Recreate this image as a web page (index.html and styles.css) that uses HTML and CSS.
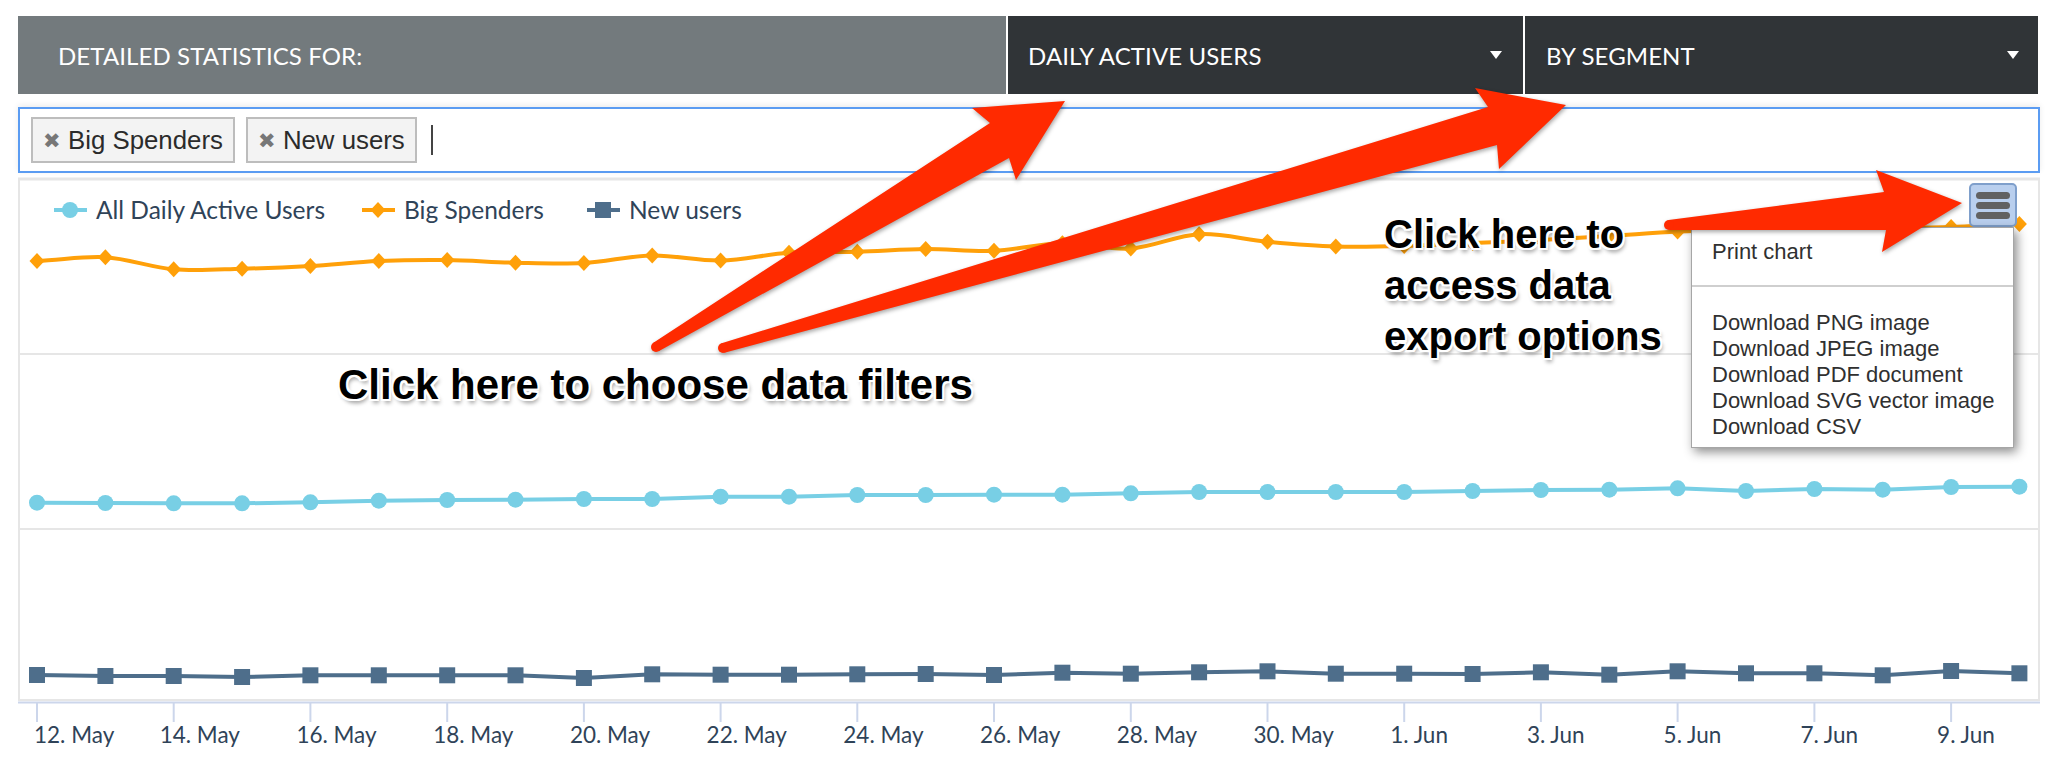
FILE: index.html
```html
<!DOCTYPE html>
<html>
<head>
<meta charset="utf-8">
<link rel="stylesheet" href="styles.css">
</head>
<body>
<div class="page">
  <div class="topbar">
    <div class="tb-label">DETAILED STATISTICS FOR:</div>
    <div class="tb-select"><span>DAILY ACTIVE USERS</span><span class="caret"></span></div>
    <div class="tb-select tb-last"><span>BY SEGMENT</span><span class="caret"></span></div>
  </div>

  <div class="filter">
    <span class="tag"><span class="tag-x">✖</span>Big Spenders</span>
    <span class="tag"><span class="tag-x">✖</span>New users</span>
    <span class="cursor"></span>
  </div>

  <div class="chart">
    <svg class="chart-svg" width="2022" height="587" viewBox="18 177 2022 587">
      <defs>
        <path id="dia" d="M0,-8 L7.5,0 L0,8 L-7.5,0 Z"/>
        <circle id="dot" r="8"/>
        <rect id="sq" x="-8" y="-8" width="16" height="16"/>
      </defs>
      <!-- frame & grid -->
      <g class="grid">
        <line x1="18" y1="179" x2="2040" y2="179" class="grid-top"/>
        <line x1="18" y1="354" x2="2040" y2="354"/>
        <line x1="18" y1="529" x2="2040" y2="529"/>
        <line x1="18" y1="700" x2="2040" y2="700"/>
        <line x1="19" y1="179" x2="19" y2="701"/>
        <line x1="2039" y1="179" x2="2039" y2="701"/>
      </g>
      <line class="axis" x1="18" y1="702.5" x2="2040" y2="702.5"/>
      <g class="ticks">
        <line x1="37" y1="703" x2="37" y2="722"/>
        <line x1="173.7" y1="703" x2="173.7" y2="722"/>
        <line x1="310.4" y1="703" x2="310.4" y2="722"/>
        <line x1="447.2" y1="703" x2="447.2" y2="722"/>
        <line x1="583.9" y1="703" x2="583.9" y2="722"/>
        <line x1="720.6" y1="703" x2="720.6" y2="722"/>
        <line x1="857.3" y1="703" x2="857.3" y2="722"/>
        <line x1="994" y1="703" x2="994" y2="722"/>
        <line x1="1130.8" y1="703" x2="1130.8" y2="722"/>
        <line x1="1267.5" y1="703" x2="1267.5" y2="722"/>
        <line x1="1404.2" y1="703" x2="1404.2" y2="722"/>
        <line x1="1540.9" y1="703" x2="1540.9" y2="722"/>
        <line x1="1677.6" y1="703" x2="1677.6" y2="722"/>
        <line x1="1814.4" y1="703" x2="1814.4" y2="722"/>
        <line x1="1951.1" y1="703" x2="1951.1" y2="722"/>
      </g>
      <g class="xlabels">
        <text x="34" y="743">12. May</text>
        <text x="159.7" y="743">14. May</text>
        <text x="296.4" y="743">16. May</text>
        <text x="433.2" y="743">18. May</text>
        <text x="569.9" y="743">20. May</text>
        <text x="706.6" y="743">22. May</text>
        <text x="843.3" y="743">24. May</text>
        <text x="980" y="743">26. May</text>
        <text x="1116.8" y="743">28. May</text>
        <text x="1253.5" y="743">30. May</text>
        <text x="1390.2" y="743">1. Jun</text>
        <text x="1526.9" y="743">3. Jun</text>
        <text x="1663.6" y="743">5. Jun</text>
        <text x="1800.4" y="743">7. Jun</text>
        <text x="1937.1" y="743">9. Jun</text>
      </g>

      <!-- legend -->
      <g class="legend">
        <line class="s-cyan-line" x1="54" y1="210" x2="87" y2="210"/>
        <use href="#dot" x="70" y="210" class="s-cyan"/>
        <text x="96" y="218.5">All Daily Active Users</text>
        <line class="s-orange-line" x1="362" y1="210" x2="395" y2="210"/>
        <use href="#dia" x="378" y="210" class="s-orange"/>
        <text x="404" y="218.5">Big Spenders</text>
        <line class="s-dark-line" x1="587" y1="210" x2="620" y2="210"/>
        <use href="#sq" x="603" y="210" class="s-dark"/>
        <text x="629" y="218.5">New users</text>
      </g>

      <!-- Big Spenders (spline) -->
      <path class="s-orange-line" d="M37,261 C59.8,260.4 82.6,255.9 105.4,257.3 C128.2,258.7 150.9,267.4 173.7,269.3 C196.5,271.2 219.3,269.3 242.1,268.7 C264.9,268.2 287.6,267.3 310.4,266 C333.2,264.7 356,262 378.8,261 C401.6,260 424.4,259.7 447.2,260 C470,260.3 492.7,262.2 515.5,262.7 C538.3,263.2 561.1,264.2 583.9,263 C606.7,261.8 629.4,255.9 652.2,255.5 C675,255.1 697.8,261 720.6,260.5 C743.4,260 766.2,254.2 789,252.7 C811.8,251.2 834.5,252.3 857.3,251.7 C880.1,251.1 902.9,249.2 925.7,249 C948.5,248.9 971.2,251.8 994,250.8 C1016.8,249.9 1039.6,243.7 1062.4,243.3 C1085.2,242.9 1108,250 1130.8,248.5 C1153.6,247 1176.3,235.3 1199.1,234.2 C1221.9,233.1 1244.7,239.7 1267.5,241.7 C1290.3,243.8 1313,245.8 1335.8,246.5 C1358.6,247.2 1381.4,246.6 1404.2,246 C1427,245.4 1449.8,244 1472.6,243 C1495.4,242 1518.1,241.2 1540.9,240 C1563.7,238.8 1586.5,237.4 1609.3,236 C1632.1,234.6 1654.8,232.5 1677.6,231.5 C1700.4,230.5 1723.2,230.4 1746,230 C1768.8,229.6 1791.6,229.3 1814.4,229 C1837.2,228.7 1859.9,228.3 1882.7,228 C1905.5,227.7 1928.3,227.7 1951.1,227 C1973.9,226.3 1996.6,224.5 2019.4,224"/>
      <g class="s-orange">
        <use href="#dia" x="37" y="261"/><use href="#dia" x="105.4" y="257.3"/><use href="#dia" x="173.7" y="269.3"/><use href="#dia" x="242.1" y="268.7"/><use href="#dia" x="310.4" y="266"/><use href="#dia" x="378.8" y="261"/><use href="#dia" x="447.2" y="260"/><use href="#dia" x="515.5" y="262.7"/><use href="#dia" x="583.9" y="263"/><use href="#dia" x="652.2" y="255.5"/><use href="#dia" x="720.6" y="260.5"/><use href="#dia" x="789" y="252.7"/><use href="#dia" x="857.3" y="251.7"/><use href="#dia" x="925.7" y="249"/><use href="#dia" x="994" y="250.8"/><use href="#dia" x="1062.4" y="243.3"/><use href="#dia" x="1130.8" y="248.5"/><use href="#dia" x="1199.1" y="234.2"/><use href="#dia" x="1267.5" y="241.7"/><use href="#dia" x="1335.8" y="246.5"/><use href="#dia" x="1404.2" y="246"/><use href="#dia" x="1472.6" y="243"/><use href="#dia" x="1540.9" y="240"/><use href="#dia" x="1609.3" y="236"/><use href="#dia" x="1677.6" y="231.5"/><use href="#dia" x="1746" y="230"/><use href="#dia" x="1814.4" y="229"/><use href="#dia" x="1882.7" y="228"/><use href="#dia" x="1951.1" y="227"/><use href="#dia" x="2019.4" y="224"/>
      </g>

      <!-- All Daily Active Users -->
      <polyline class="s-cyan-line" points="37,502.7 105.4,503 173.7,503.3 242.1,503.3 310.4,502.3 378.8,500.7 447.2,500 515.5,499.7 583.9,499 652.2,499 720.6,496.7 789,496.7 857.3,495 925.7,495 994,494.7 1062.4,494.7 1130.8,493.3 1199.1,492 1267.5,492 1335.8,492 1404.2,492 1472.6,491 1540.9,490 1609.3,489.7 1677.6,488.3 1746,491 1814.4,489 1882.7,489.7 1951.1,487 2019.4,486.7"/>
      <g class="s-cyan">
        <use href="#dot" x="37" y="502.7"/><use href="#dot" x="105.4" y="503"/><use href="#dot" x="173.7" y="503.3"/><use href="#dot" x="242.1" y="503.3"/><use href="#dot" x="310.4" y="502.3"/><use href="#dot" x="378.8" y="500.7"/><use href="#dot" x="447.2" y="500"/><use href="#dot" x="515.5" y="499.7"/><use href="#dot" x="583.9" y="499"/><use href="#dot" x="652.2" y="499"/><use href="#dot" x="720.6" y="496.7"/><use href="#dot" x="789" y="496.7"/><use href="#dot" x="857.3" y="495"/><use href="#dot" x="925.7" y="495"/><use href="#dot" x="994" y="494.7"/><use href="#dot" x="1062.4" y="494.7"/><use href="#dot" x="1130.8" y="493.3"/><use href="#dot" x="1199.1" y="492"/><use href="#dot" x="1267.5" y="492"/><use href="#dot" x="1335.8" y="492"/><use href="#dot" x="1404.2" y="492"/><use href="#dot" x="1472.6" y="491"/><use href="#dot" x="1540.9" y="490"/><use href="#dot" x="1609.3" y="489.7"/><use href="#dot" x="1677.6" y="488.3"/><use href="#dot" x="1746" y="491"/><use href="#dot" x="1814.4" y="489"/><use href="#dot" x="1882.7" y="489.7"/><use href="#dot" x="1951.1" y="487"/><use href="#dot" x="2019.4" y="486.7"/>
      </g>

      <!-- New users -->
      <polyline class="s-dark-line" points="37,675 105.4,676 173.7,676 242.1,677 310.4,675.3 378.8,675.3 447.2,675.3 515.5,675.3 583.9,678 652.2,674.3 720.6,674.7 789,674.7 857.3,674.3 925.7,674 994,675 1062.4,672.7 1130.8,673.7 1199.1,672.3 1267.5,671.3 1335.8,673.7 1404.2,673.7 1472.6,674 1540.9,672.3 1609.3,674.7 1677.6,671.3 1746,673.3 1814.4,673.3 1882.7,675.3 1951.1,671 2019.4,673.3"/>
      <g class="s-dark">
        <use href="#sq" x="37" y="675"/><use href="#sq" x="105.4" y="676"/><use href="#sq" x="173.7" y="676"/><use href="#sq" x="242.1" y="677"/><use href="#sq" x="310.4" y="675.3"/><use href="#sq" x="378.8" y="675.3"/><use href="#sq" x="447.2" y="675.3"/><use href="#sq" x="515.5" y="675.3"/><use href="#sq" x="583.9" y="678"/><use href="#sq" x="652.2" y="674.3"/><use href="#sq" x="720.6" y="674.7"/><use href="#sq" x="789" y="674.7"/><use href="#sq" x="857.3" y="674.3"/><use href="#sq" x="925.7" y="674"/><use href="#sq" x="994" y="675"/><use href="#sq" x="1062.4" y="672.7"/><use href="#sq" x="1130.8" y="673.7"/><use href="#sq" x="1199.1" y="672.3"/><use href="#sq" x="1267.5" y="671.3"/><use href="#sq" x="1335.8" y="673.7"/><use href="#sq" x="1404.2" y="673.7"/><use href="#sq" x="1472.6" y="674"/><use href="#sq" x="1540.9" y="672.3"/><use href="#sq" x="1609.3" y="674.7"/><use href="#sq" x="1677.6" y="671.3"/><use href="#sq" x="1746" y="673.3"/><use href="#sq" x="1814.4" y="673.3"/><use href="#sq" x="1882.7" y="675.3"/><use href="#sq" x="1951.1" y="671"/><use href="#sq" x="2019.4" y="673.3"/>
      </g>
    </svg>

    <div class="menu-btn"><span></span><span></span><span></span></div>
    <div class="menu">
      <div class="menu-item">Print chart</div>
      <div class="menu-sep"></div>
      <div class="menu-item">Download PNG image</div>
      <div class="menu-item">Download JPEG image</div>
      <div class="menu-item">Download PDF document</div>
      <div class="menu-item">Download SVG vector image</div>
      <div class="menu-item">Download CSV</div>
    </div>
  </div>

  <svg class="arrows" width="2054" height="764" viewBox="0 0 2054 764">
    <polygon points="653.4,342.7 990,123 972,108 1065,101 1016,180 1009,158 658.6,351.3"/>
    <circle cx="656" cy="347" r="5"/>
    <polygon points="721.6,343.2 1488,107 1475,88 1566,105 1499,169 1497,145 724.4,352.8"/>
    <circle cx="723" cy="348" r="5"/>
    <polygon points="1668.6,220 1884,192 1876,170 1962,203 1882,252 1886,230 1669.4,230"/>
    <circle cx="1669" cy="225" r="5"/>
  </svg>

  <div class="note note-filters">Click here to choose data filters</div>
  <div class="note note-export">Click here to<br>access data<br>export options</div>
</div>
</body>
</html>
```

FILE: styles.css
```css
* { box-sizing: border-box; }
html, body { margin: 0; padding: 0; background: #fff; }
body { overflow: hidden; }

.page {
  position: relative;
  width: 2054px;
  height: 764px;
  padding: 16px 14px 0 18px;
  font-family: "Liberation Sans", Arial, sans-serif;
}

/* top bar */
.topbar {
  display: grid;
  grid-template-columns: 988px 515px 513px;
  column-gap: 2px;
  height: 78px;
  font-family: Lato, "Noto Sans", sans-serif;
  font-size: 24px;
  color: #fff;
  letter-spacing: 0.1px;
}
.tb-label {
  background: #737a7d;
  display: flex;
  align-items: center;
  padding-left: 40px;
}
.tb-select {
  background: #303437;
  display: flex;
  align-items: center;
  justify-content: space-between;
  padding: 0 21px 0 20px;
}
.tb-last { padding: 0 19px 0 21px; }
.caret {
  width: 0;
  height: 0;
  border-left: 6px solid transparent;
  border-right: 6px solid transparent;
  border-top: 8px solid #fff;
}

/* filter input */
.filter {
  margin-top: 13px;
  height: 66px;
  border: 2px solid #5b9cf2;
  display: flex;
  align-items: center;
  gap: 11px;
  padding-left: 11px;
  box-shadow: 0 -2px 6px rgba(0,0,0,0.08);
}
.tag {
  height: 46px;
  display: flex;
  align-items: center;
  border: 2px solid #bdbdbd;
  background: #f3f3f3;
  padding: 0 10px;
  font-size: 25.8px;
  color: #2b2b2b;
}
.tag-x {
  width: 14px;
  margin-right: 11px;
  font-size: 21px;
  line-height: 1;
  color: #777;
  text-align: center;
}
.cursor {
  width: 2px;
  height: 30px;
  background: #444;
  margin-left: 3px;
}

/* chart */
.chart {
  position: relative;
  margin-top: 4px;
  height: 587px;
}
.chart-svg { display: block; }
.grid line { stroke: #e6e6e6; stroke-width: 2; }
.grid .grid-top { stroke-width: 3; }
.axis { stroke: #ccd6eb; stroke-width: 2; }
.ticks line { stroke: #ccd6eb; stroke-width: 2; }
.xlabels text, .legend text {
  font-family: Lato, "Noto Sans", sans-serif;
  fill: #2f4358;
}
.xlabels text { font-size: 22.5px; }
.legend text { font-size: 24.5px; }
.s-orange-line { fill: none; stroke: #ffa009; stroke-width: 4; }
.s-cyan-line { fill: none; stroke: #78cfe5; stroke-width: 4; }
.s-dark-line { fill: none; stroke: #4e6e8b; stroke-width: 4; }
.s-orange { fill: #ffa009; }
.s-cyan { fill: #78cfe5; }
.s-dark { fill: #4e6e8b; }

.menu-btn {
  position: absolute;
  left: 1951px;
  top: 6px;
  width: 48px;
  height: 44px;
  border: 2px solid #7f9fcb;
  border-radius: 5px;
  background: #b9cfee;
  display: flex;
  flex-direction: column;
  align-items: center;
  justify-content: center;
  gap: 3px;
}
.menu-btn span {
  width: 34px;
  height: 7px;
  border-radius: 4px;
  background: #616161;
}
.menu {
  position: absolute;
  left: 1673px;
  top: 50px;
  width: 323px;
  height: 221px;
  background: #fff;
  border: 1px solid #a6a6a6;
  box-shadow: 3px 4px 10px rgba(0,0,0,0.45);
  padding: 11px 0 10px;
}
.menu-item {
  font-size: 22px;
  line-height: 26px;
  color: #303030;
  padding-left: 20px;
}
.menu-sep {
  height: 2px;
  background: #cfcfcf;
  margin: 20px 0 23px;
}

/* annotations */
.arrows {
  position: absolute;
  left: 0;
  top: 0;
  pointer-events: none;
  fill: #ff2a00;
  filter: drop-shadow(1px 2px 2px rgba(0,0,0,0.35));
}
.note {
  position: absolute;
  font-family: "Liberation Sans", Arial, sans-serif;
  font-weight: bold;
  color: #000;
  white-space: nowrap;
  text-shadow:
    -2px -2px 0 #fff, 2px -2px 0 #fff, -2px 2px 0 #fff, 2px 2px 0 #fff,
    0 -2px 0 #fff, 0 2px 0 #fff, -2px 0 0 #fff, 2px 0 0 #fff,
    2px 4px 4px rgba(0,0,0,0.4);
}
.note-filters {
  left: 338px;
  top: 360px;
  font-size: 42px;
  line-height: 50px;
}
.note-export {
  left: 1384px;
  top: 209px;
  font-size: 40px;
  line-height: 51px;
}
```
